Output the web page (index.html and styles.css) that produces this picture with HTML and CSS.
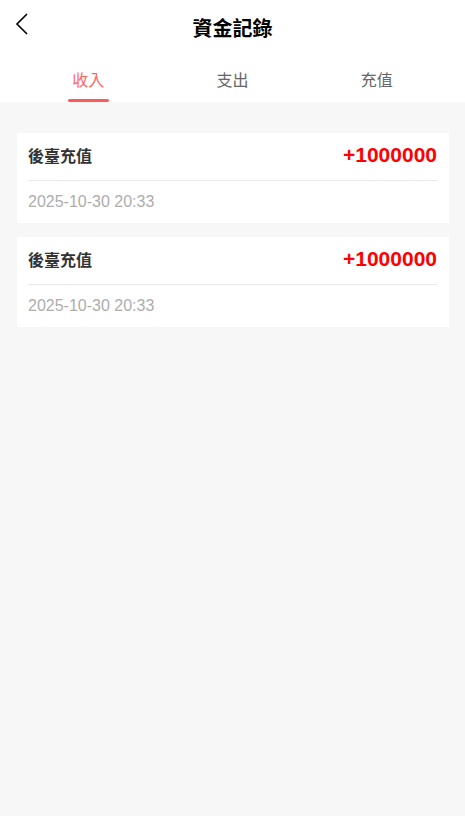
FILE: index.html
```html
<!DOCTYPE html>
<html lang="zh-Hant">
  <head>
    <meta charset="UTF-8" />
    <meta name="viewport" content="width=device-width, initial-scale=1.0" />
    <title>資金記錄</title>
    <link rel="stylesheet" href="styles.css">
  </head>
  <body>
    <div class="header">
      <div class="nav">
        <a class="back" href="#">
          <svg width="16" height="24" viewBox="0 0 16 24">
            <path d="M12 2 L2 12 L12 22" fill="none" stroke="#000" stroke-width="1.6" />
          </svg>
        </a>
        <h1>資金記錄</h1>
      </div>
      <div class="tabs">
        <div class="tab active">收入</div>
        <div class="tab">支出</div>
        <div class="tab">充值</div>
      </div>
    </div>

    <div class="list">
      <div class="card">
        <div class="row">
          <span class="name">後臺充值</span>
          <span class="amount">+1000000</span>
        </div>
        <div class="date">2025-10-30 20:33</div>
      </div>
      <div class="card">
        <div class="row">
          <span class="name">後臺充值</span>
          <span class="amount">+1000000</span>
        </div>
        <div class="date">2025-10-30 20:33</div>
      </div>
    </div>
  </body>
</html>
```

FILE: styles.css
```css
body {
  margin: 0;
  padding: 0;
  font-family: "Liberation Sans", Arial, "Noto Sans CJK TC", sans-serif;
  background-color: #f7f7f7;
  min-height: 100vh;
}
.header {
  background-color: white;
}
.nav {
  height: 55px;
  position: relative;
  display: flex;
  justify-content: center;
  align-items: center;
}
.nav h1 {
  margin: 0;
  font-size: 20px;
  font-weight: bold;
  color: #000;
}
.back {
  position: absolute;
  left: 15px;
  top: 12px;
  display: block;
  height: 24px;
}
.tabs {
  display: flex;
  padding: 0 16px;
  height: 47px;
}
.tab {
  flex: 1;
  display: flex;
  justify-content: center;
  align-items: center;
  font-size: 16px;
  color: #666;
  position: relative;
}
.tab.active {
  color: #ff6464;
}
.tab.active::after {
  content: "";
  position: absolute;
  bottom: 0;
  left: 50%;
  width: 41px;
  margin-left: -20px;
  height: 3px;
  border-radius: 2px;
  background-color: #ff5a5a;
}
.list {
  padding: 31px 16px 0 17px;
  display: flex;
  flex-direction: column;
  gap: 14px;
}
.card {
  background-color: white;
  padding: 0 12px 0 11px;
}
.row {
  height: 43px;
  padding-bottom: 4px;
  display: flex;
  justify-content: space-between;
  align-items: center;
  border-bottom: 1px solid #e8e9ee;
}
.name {
  font-size: 16px;
  font-weight: bold;
  color: #333;
}
.amount {
  font-size: 21px;
  font-weight: bold;
  color: #ff0000;
}
.date {
  height: 42px;
  display: flex;
  align-items: center;
  font-size: 16px;
  color: #adadad;
}
```
